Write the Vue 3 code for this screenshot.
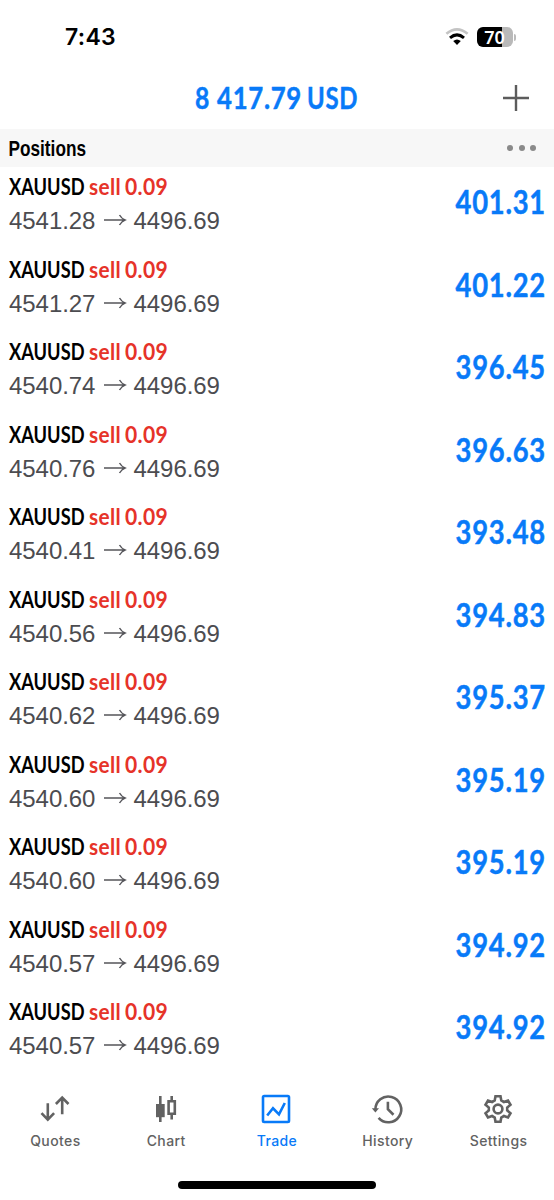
<script setup>
const positions = [
  ['4541.28', '401.31'],
  ['4541.27', '401.22'],
  ['4540.74', '396.45'],
  ['4540.76', '396.63'],
  ['4540.41', '393.48'],
  ['4540.56', '394.83'],
  ['4540.62', '395.37'],
  ['4540.60', '395.19'],
  ['4540.60', '395.19'],
  ['4540.57', '394.92'],
  ['4540.57', '394.92'],
].map(([open, profit], id) => ({ id, open, profit, current: '4496.69' }))

const tabs = ['Quotes', 'Chart', 'Trade', 'History', 'Settings']
</script>

<template>
  <main class="screen">
    <header class="status">
      <span class="clock">7:43</span>
      <div class="indicators">
        <svg class="wifi" width="24" height="18" viewBox="0 0 24 18" fill="none">
          <path d="M1.4 5.8Q12-3.2 22.6 5.8" stroke="#c4c4c4" stroke-width="2.7" />
          <path d="M5 9.8Q12 4 19 9.8" stroke="#000" stroke-width="3" />
          <path d="M8.2 13Q12 9.8 15.8 13L12 17Z" fill="#000" />
        </svg>
        <div class="battery"><span>70</span></div>
        <i class="battery-tip"></i>
      </div>
    </header>

    <section class="balance">
      <svg class="total" width="164" height="38">
        <text transform="translate(0 29.5) scale(1 1.14)" textLength="15" lengthAdjust="spacingAndGlyphs">8</text>
        <text transform="translate(22 29.5) scale(1 1.14)" textLength="85" lengthAdjust="spacingAndGlyphs">417.79</text>
        <text transform="translate(112 29.5) scale(1 1.14)" textLength="51" lengthAdjust="spacingAndGlyphs">USD</text>
      </svg>
      <svg class="add" width="26" height="26" viewBox="0 0 26 26"><path d="M13 0v26M0 13h26" stroke="#5c5c5c" stroke-width="2.4" /></svg>
    </section>

    <section class="group">
      <svg class="group-title" width="80" height="38">
        <text transform="translate(-.5 26.5) scale(1 1.25)" textLength="77.5" lengthAdjust="spacingAndGlyphs">Positions</text>
      </svg>
      <div class="more"><i></i><i></i><i></i></div>
    </section>

    <ul class="list">
      <li v-for="p in positions" :key="p.id" class="row">
        <div class="deal">
          <div class="symbol">
            <svg width="80" height="36">
              <text transform="translate(0 28) scale(1 1.29)" textLength="75.5" lengthAdjust="spacingAndGlyphs">XAUUSD</text>
            </svg>
            <svg class="side" width="80" height="36">
              <text transform="translate(0 28) scale(1 1.22)" textLength="32" lengthAdjust="spacingAndGlyphs">sell</text>
              <text transform="translate(36 28) scale(1 1.22)" textLength="43" lengthAdjust="spacingAndGlyphs">0.09</text>
            </svg>
          </div>
          <div class="prices">
            <span>{{ p.open }}</span>
            <svg width="22" height="12" viewBox="0 0 22 12" fill="none"><path d="M0 6h21M15.5 1Q17.5 4.5 21 6Q17.5 7.5 15.5 11" stroke="#55555a" stroke-width="1.5" /></svg>
            <span>{{ p.current }}</span>
          </div>
        </div>
        <svg class="profit" width="91" height="60">
          <text transform="translate(.5 47) scale(1 1.16)" textLength="90.5" lengthAdjust="spacingAndGlyphs">{{ p.profit }}</text>
        </svg>
      </li>
    </ul>

    <nav class="tabs">
      <div v-for="tab in tabs" :key="tab" class="tab" :class="{ active: tab === 'Trade' }">
        <svg width="32" height="32" viewBox="0 0 32 32" fill="none" stroke="currentColor" stroke-width="2.6">
          <template v-if="tab === 'Quotes'">
            <path d="M8.8 10.2v17M2.5 20.2l6.3 6.5 6.3-6.5M23.2 21.3V4.5M16.9 11l6.3-6.5L29.5 11" />
          </template>
          <template v-else-if="tab === 'Chart'">
            <path d="M10.3 3v26M21.7 3v5M21.7 21v5.5" />
            <path d="M6 11h8.7v13.2H6z" fill="currentColor" stroke="none" />
            <path d="M18.6 8.3h6.2v12.4h-6.2z" />
          </template>
          <template v-else-if="tab === 'Trade'">
            <rect x="3" y="3" width="26" height="26" rx="1.2" />
            <path d="M7.2 22.5L13 15.3l6 6L24.8 10" />
          </template>
          <template v-else-if="tab === 'History'">
            <path d="M4.4 16.8A12.9 12.9 0 1 1 7.6 24.9M16.9 8.8v7.5l5.6 5.4" />
            <path d="M.8 15.2h7.2l-3.6 4.2z" fill="currentColor" stroke="none" />
          </template>
          <template v-else>
            <path d="M13.5 3.2h5l.8 4.3 2.6 1.5 4.1-1.5 2.5 4.3-3.3 2.8v2.8l3.3 2.8-2.5 4.3-4.1-1.5-2.6 1.5-.8 4.3h-5l-.8-4.3-2.6-1.5L6 24.5l-2.5-4.3 3.3-2.8v-2.8l-3.3-2.8L6 7.5 10.1 9l2.6-1.5z" />
            <circle cx="16" cy="16" r="4.4" />
          </template>
        </svg>
        <span>{{ tab }}</span>
      </div>
    </nav>
    <div class="home"></div>
  </main>
</template>

<style scoped>
.screen {
  width: 554px;
  height: 1200px;
  display: flex;
  flex-direction: column;
  background: #fff;
  overflow: hidden;
  font-family: "Liberation Sans", Arial, sans-serif;
}
svg { display: block; overflow: visible; flex: none; }
text { font-family: Lato, sans-serif; font-weight: 700; }
.status {
  height: 66px;
  display: flex;
  justify-content: space-between;
  padding: 0 38px 0 65px;
  color: #000;
}
.clock {
  font: 600 23px/74px Inter, sans-serif;
  letter-spacing: .3px;
}
.indicators { display: flex; align-items: center; height: 20px; margin-top: 27px; }
.wifi { margin-right: 8px; width: 24px; }
.battery {
  width: 36px;
  height: 20px;
  border-radius: 6px;
  background: linear-gradient(to right, #000 25px, #b9b9b9 25px);
  color: #fff;
  font: 600 18px/20px "Noto Sans", sans-serif;
  text-align: center;
  text-indent: -1px;
}
.battery-tip { width: 2px; height: 7px; margin-left: 1px; border-radius: 0 2px 2px 0; background: #bbb; }
.balance {
  height: 63px;
  display: flex;
  align-items: center;
  justify-content: flex-end;
  padding-right: 25.5px;
}
.total { margin-right: 143.5px; fill: #087af8; stroke: #087af8; stroke-width: .4px; font-size: 26px; letter-spacing: .7px; }
.group {
  height: 38px;
  background: #f7f7f7;
  display: flex;
  align-items: center;
  justify-content: space-between;
  padding: 0 18px 0 9px;
}
.group-title text { font: 700 17.2px "Liberation Sans", sans-serif; }
.more { display: flex; gap: 5.5px; }
.more i { width: 6px; height: 6px; border-radius: 50%; background: #8a8a8a; }
.list { list-style: none; margin: 0; padding: 0; height: 907.5px; flex: none; }
.row { height: 82.5px; display: flex; justify-content: space-between; padding: 0 8px 0 9px; }
.symbol { display: flex; height: 36px; font-size: 18.2px; fill: #000; }
.side { fill: #e63329; font-size: 19.2px; letter-spacing: .3px; }
.prices { display: flex; align-items: center; height: 36px; color: #4c4c50; font-size: 24px; line-height: 36px; }
.prices span { width: 86.5px; letter-spacing: -0.05px; }
.prices svg { margin: -2px 8px 0; }
.profit { fill: #087af8; stroke: #087af8; stroke-width: .4px; font-size: 27.5px; letter-spacing: .8px; }
.tabs { display: flex; height: 88px; padding-top: 18.5px; box-sizing: border-box; flex: none; }
.tab {
  width: 110.8px;
  display: flex;
  flex-direction: column;
  align-items: center;
  color: #626262;
  font: 500 14px/20px Inter, sans-serif;
  letter-spacing: .4px;
}
.tab svg { margin-left: -1px; }
.tab span { margin-top: 6px; }
.tab.active { color: #087af8; }
.home { width: 198px; height: 7.5px; margin: 18.5px auto 0; border-radius: 4px; background: #000; flex: none; }
</style>
